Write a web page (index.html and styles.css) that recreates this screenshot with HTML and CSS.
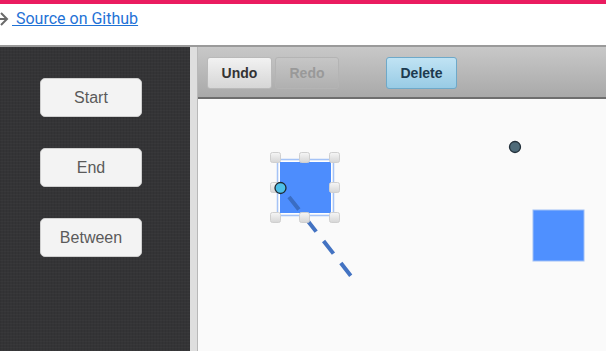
FILE: index.html
```html
<!DOCTYPE html>
<html>
<head>
<link rel="stylesheet" href="styles.css">
</head>
<body>
<div class="header">
    <svg class="back-icon" width="14" height="14" viewBox="0 0 14 14">
        <path d="M0 7 H12 M6 1 L12 7 L6 13" fill="none" stroke="#6a6a6a" stroke-width="2"/>
    </svg>
    <a class="source-link" href="#"> Source on Github</a>
</div>
<div class="app">
    <div class="sidebar">
        <button class="add-btn">Start</button>
        <button class="add-btn">End</button>
        <button class="add-btn">Between</button>
    </div>
    <div class="divider"></div>
    <div class="editor">
        <div class="toolbar">
            <div class="history">
                <button class="tool-btn">Undo</button>
                <button class="tool-btn disabled">Redo</button>
            </div>
            <button class="tool-btn delete">Delete</button>
        </div>
        <div class="canvas">
            <svg class="drawing" width="408" height="252" viewBox="198 99 408 252">
                <rect x="279.5" y="161.5" width="52" height="52" fill="#4d8dfd" stroke="#ffffff" stroke-width="1"/>
                <rect x="277.5" y="159.5" width="56" height="56" fill="none" stroke="#a5c3f6" stroke-width="1.5"/>
                <rect x="533" y="210" width="51" height="51" fill="#4f90ff" stroke="#9fbff6" stroke-width="1"/>
                <line x1="289" y1="197" x2="351" y2="276" stroke="#3a6cc0" stroke-width="4" stroke-dasharray="16 12" opacity="0.95"/>
                <defs>
                    <linearGradient id="handle" x1="0" y1="0" x2="0" y2="1">
                        <stop offset="0" stop-color="#f6f6f6"/>
                        <stop offset="1" stop-color="#d6d6d6"/>
                    </linearGradient>
                </defs>
                <g fill="url(#handle)" stroke="#cfcfcf" stroke-width="1">
                    <rect x="270.5" y="152.5" width="10" height="10" rx="2"/>
                    <rect x="299.5" y="152.5" width="10" height="10" rx="2"/>
                    <rect x="329.5" y="152.5" width="10" height="10" rx="2"/>
                    <rect x="270.5" y="182.5" width="10" height="10" rx="2"/>
                    <rect x="329.5" y="182.5" width="10" height="10" rx="2"/>
                    <rect x="270.5" y="212.5" width="10" height="10" rx="2"/>
                    <rect x="299.5" y="212.5" width="10" height="10" rx="2"/>
                    <rect x="329.5" y="212.5" width="10" height="10" rx="2"/>
                </g>
                <circle cx="280.5" cy="188" r="5.5" fill="#4dbfe8" stroke="#1e2a33" stroke-width="1.3"/>
                <circle cx="515" cy="147" r="5.5" fill="#4f6b79" stroke="#23303a" stroke-width="1.3"/>
            </svg>
        </div>
    </div>
</div>
</body>
</html>
```

FILE: styles.css
```css
* {
    margin: 0;
    padding: 0;
    box-sizing: border-box;
}

body {
    font-family: "Liberation Sans", Arial, sans-serif;
    background: white;
    overflow: hidden;
}

.header {
    height: 45px;
    border-top: 4px solid #ea1c60;
    display: flex;
    align-items: flex-start;
    padding-top: 5px;
}

.back-icon {
    margin-left: -5px;
    margin-top: 3px;
}

.source-link {
    font-family: Roboto, Arial, sans-serif;
    font-size: 16px;
    color: #1f72d6;
    text-decoration: underline;
    white-space: pre;
    margin-left: 3px;
}

.app {
    display: flex;
    height: 306px;
    border-top: 2px solid #9a9a9a;
}

.sidebar {
    width: 190px;
    background-color: #343436;
    background-image:
        repeating-linear-gradient(0deg, rgba(255,255,255,0.02) 0 1px, transparent 1px 3px),
        repeating-linear-gradient(90deg, rgba(0,0,0,0.06) 0 1px, transparent 1px 3px);
    display: flex;
    flex-direction: column;
    align-items: flex-start;
    gap: 31px;
    padding: 31px 0 0 40px;
}

.add-btn {
    width: 102px;
    height: 39px;
    background: #f3f3f3;
    border: 1px solid #cfcfcf;
    border-radius: 5px;
    color: #5a5a5a;
    font-family: "Liberation Sans", Arial, sans-serif;
    font-size: 16px;
}

.divider {
    width: 8px;
    background: #dedede;
    border-right: 1px solid #b8b8b8;
}

.editor {
    flex: 1;
    display: flex;
    flex-direction: column;
}

.toolbar {
    height: 52px;
    background: linear-gradient(#c8c8c8, #a9a9a9);
    border-bottom: 2px solid #6e6e6e;
    display: flex;
    align-items: center;
    padding: 2px 0 0 9px;
    gap: 47px;
}

.history {
    display: flex;
    gap: 3px;
}

.tool-btn {
    width: 65px;
    height: 32px;
    border: 1px solid #b9b9b9;
    border-radius: 3px;
    background: linear-gradient(#f2f2f2, #d6d6d6);
    color: #333;
    font-family: "Liberation Sans", Arial, sans-serif;
    font-weight: bold;
    font-size: 14px;
}

.tool-btn.disabled {
    width: 64px;
    background: linear-gradient(#c6c6c6, #b0b0b0);
    border-color: #b4b4b4;
    color: #999;
}

.tool-btn.delete {
    width: 71px;
    background: linear-gradient(#c0e3f4, #98cbe5);
    border-color: #6ea9c9;
    color: #1d3b50;
}

.canvas {
    flex: 1;
    background: #fafafa;
    overflow: hidden;
}

.drawing {
    display: block;
}
```
